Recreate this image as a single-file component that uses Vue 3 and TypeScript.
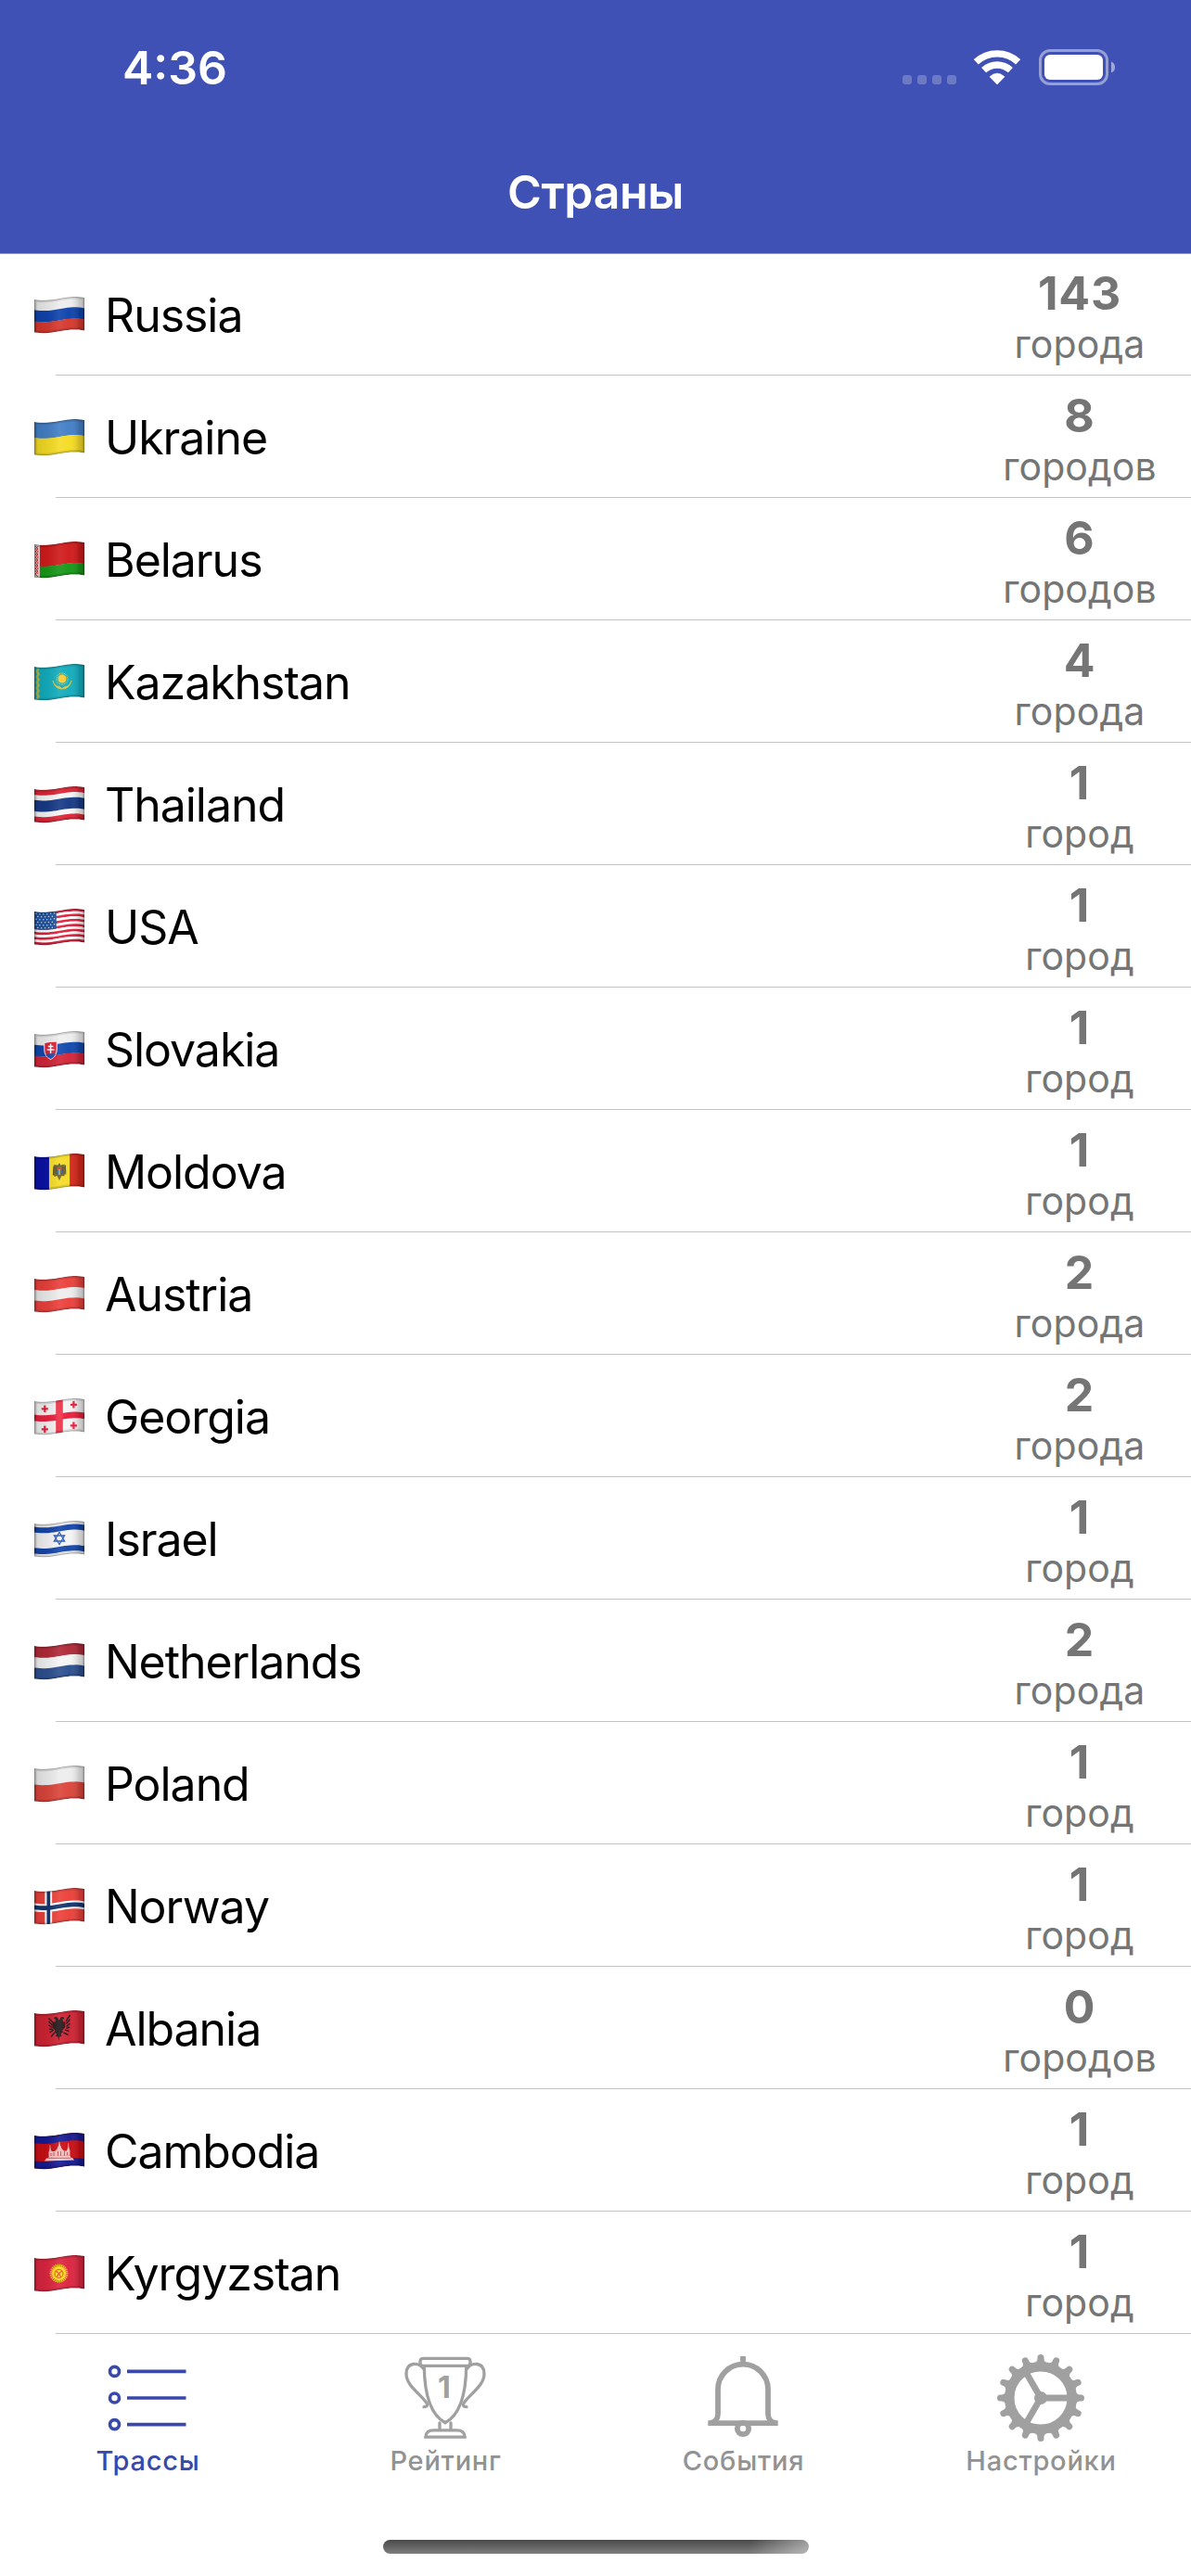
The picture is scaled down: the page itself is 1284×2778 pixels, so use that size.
<script setup lang="ts">
interface Shape {
  d?: string
  fill?: string
  stroke?: string
  sw?: number
}

interface Country {
  name: string
  count: number
  unit: string
  flag: Shape[]
}

const W = 54
const H = 35.4

/** Vertical offset of the waving cloth at horizontal position x. */
const wave = (x: number): number => {
  const amp = x > 44 ? 1.9 + (x - 44) * 0.02 : 1.9
  const period = x > 44 ? 54 : 68
  const phase = x > 44 ? (3 * Math.PI) / 2 + (2 * Math.PI * (x - 44)) / period : (2 * Math.PI * (x + 7)) / period
  return 1.9 + amp * Math.sin(phase)
}

/** A piece of cloth between two heights (0..1) and two widths (0..1). */
const band = (y1: number, y2: number, fill: string, x1 = 0, x2 = 1): Shape => {
  const steps = 18
  const xs = Array.from({ length: steps + 1 }, (_, i) => (x1 + ((x2 - x1) * i) / steps) * W)
  const top = xs.map((x) => `${x.toFixed(2)},${(wave(x) + y1 * H).toFixed(2)}`)
  const bottom = [...xs].reverse().map((x) => `${x.toFixed(2)},${(wave(x) + y2 * H).toFixed(2)}`)
  return { d: `M${top.join('L')}L${bottom.join('L')}Z`, fill }
}

const dots = (points: number[][], r: number, fill: string): Shape[] =>
  points.map(([x, y]) => ({ d: `M${x - r},${y}a${r},${r} 0 1,0 ${2 * r},0a${r},${r} 0 1,0 ${-2 * r},0Z`, fill }))

const rays = (cx: number, cy: number, r1: number, r2: number, n: number): string =>
  Array.from({ length: n }, (_, i) => {
    const a = (2 * Math.PI * i) / n
    return `M${(cx + r1 * Math.cos(a)).toFixed(2)},${(cy + r1 * Math.sin(a)).toFixed(2)}L${(cx + r2 * Math.cos(a)).toFixed(2)},${(cy + r2 * Math.sin(a)).toFixed(2)}`
  }).join('')

const clothPath = band(0, 1, '').d

const usa: Shape[] = [
  ...Array.from({ length: 13 }, (_, i) => band(i / 13, (i + 1) / 13, i % 2 ? '#ffffff' : '#e0213c')),
  band(0, 7 / 13, '#1f55a5', 0, 0.44),
  ...Array.from({ length: 6 }, (_, r) =>
    dots(
      Array.from({ length: 6 }, (_, c) => {
        const x = 2 + c * 3.9 + (r % 2 ? 1.8 : 0)
        return [x, wave(x) + 2 + r * 3]
      }).filter(([x]) => x < 23),
      0.75,
      '#d3e2f4',
    ),
  ).flat(),
]

const georgiaCross = (x: number, y: number): Shape => ({ d: `M${x - 3.5},${y}h7M${x},${y - 3.7}v7.4`, stroke: '#e8213f', sw: 2.2 })

const countries: Country[] = [
  { name: 'Russia', count: 143, unit: 'города', flag: [band(0, 0.35, '#ededed'), band(0.32, 0.67, '#0f43ac'), band(0.66, 1, '#d6392f')] },
  { name: 'Ukraine', count: 8, unit: 'городов', flag: [band(0, 0.49, '#4480c7'), band(0.48, 1, '#f5dc25')] },
  {
    name: 'Belarus',
    count: 6,
    unit: 'городов',
    flag: [
      band(0, 0.66, '#d01b1c'),
      band(0.65, 1, '#17981a'),
      band(0, 1, '#eed5d5', 0, 0.11),
      { d: 'M1,5l3,3l-3,3l3,3l-3,3l3,3l-3,3l3,3l-3,3l3,3l-3,3l3,3M4.3,5l-3,3l3,3l-3,3l3,3l-3,3l3,3l-3,3l3,3l-3,3l3,3', stroke: '#c23b41', sw: 1 },
    ],
  },
  {
    name: 'Kazakhstan',
    count: 4,
    unit: 'города',
    flag: [
      band(0, 1, '#13adbd'),
      { d: 'M4.5,5l-1.8,3l1.8,3l-1.8,3l1.8,3l-1.8,3l1.8,3l-1.8,3l1.8,3l-1.8,3l1.8,3l-1.8,3', stroke: '#b6b743', sw: 2.6 },
      ...dots([[30, 16]], 4.5, '#f9cb35'),
      { d: rays(30, 16, 5.3, 6.7, 22), stroke: '#e8c83f', sw: 0.8 },
      { d: 'M20,18q2,9 10,9t10,-9q-2,6 -7,6.6l-3,2l-3,-2q-5,-.6 -7,-6.6z', fill: '#e6c63c', stroke: '#d9c443', sw: 0.8 },
    ],
  },
  {
    name: 'Thailand',
    count: 1,
    unit: 'город',
    flag: [band(0, 1, '#f6f6f6'), band(0, 0.17, '#dc2637'), band(0.33, 0.67, '#183a86'), band(0.83, 1, '#dc2637')],
  },
  { name: 'USA', count: 1, unit: 'город', flag: usa },
  {
    name: 'Slovakia',
    count: 1,
    unit: 'город',
    flag: [
      band(0, 0.34, '#eeeeee'),
      band(0.33, 0.67, '#1149ae'),
      band(0.66, 1, '#d22639'),
      { d: 'M10.8,12.5q6.700,-1.500 13.500,-1.500v8q0,8 -6.700,11.500q-6.800,-3.500 -6.800,-10.500z', fill: '#e02339', stroke: '#ffffff', sw: 1 },
      { d: 'M12.3,25.5q2.500,-2 5.300,-1q2.700,-1.300 5.200,.5q-1.500,3.300 -5.200,5q-3.800,-1.900 -5.300,-4.500z', fill: '#1a55b5' },
      { d: 'M17.6,13.500v10.500M14.800,16.500h5.600M13.700,20h7.800', stroke: '#ffffff', sw: 1.5 },
    ],
  },
  {
    name: 'Moldova',
    count: 1,
    unit: 'город',
    flag: [
      band(0, 1, '#0b12a6', 0, 0.3),
      band(0, 1, '#f4dc27', 0.295, 0.71),
      band(0, 1, '#d4281c', 0.705, 1),
      { d: 'M27,10l1.500,2.500l4,-1l1.200,8l-1.500,5l-2.700,-.5l-2.500,5l-2.500,-5l-2.800,1l-1.600,-5l1.200,-8l4,.5z', fill: '#6f602c' },
      { d: 'M21,13.500l-.6,10M33.500,12.500l.3,10M23,14l1,8M31,14l-1,8', stroke: '#4c4a22', sw: 1 },
      { d: 'M24.500,15h5v3h-5z', fill: '#d4432a' },
      { d: 'M24,18h6v2.500l-3,3.500l-3,-3.500z', fill: '#2b70ab' },
      { d: 'M27,17v6', stroke: '#e8b62d', sw: 1.3 },
    ],
  },
  { name: 'Austria', count: 2, unit: 'города', flag: [band(0, 0.35, '#eb413c'), band(0.34, 0.67, '#ededed'), band(0.66, 1, '#eb413c')] },
  {
    name: 'Georgia',
    count: 2,
    unit: 'города',
    flag: [
      band(0, 1, '#f3f3f3'),
      band(0.41, 0.6, '#e8213f'),
      band(0, 1, '#ef3149', 0.43, 0.57),
      georgiaCross(11.3, 11.3),
      georgiaCross(42.4, 6.8),
      georgiaCross(11.3, 33.3),
      georgiaCross(42.4, 29.3),
    ],
  },
  {
    name: 'Israel',
    count: 1,
    unit: 'город',
    flag: [
      band(0, 1, '#f4f4f4'),
      band(0.1, 0.27, '#1546a9'),
      band(0.74, 0.91, '#1546a9'),
      { d: 'M27,12.500l5.600,9.500h-11.200zM27,25.500l-5.600,-9.500h11.200z', stroke: '#2455b8', sw: 1.3 },
    ],
  },
  { name: 'Netherlands', count: 2, unit: 'города', flag: [band(0, 0.35, '#b02a38'), band(0.34, 0.67, '#f4f4f4'), band(0.66, 1, '#2d5090')] },
  { name: 'Poland', count: 1, unit: 'город', flag: [band(0, 0.5, '#ededed'), band(0.49, 1, '#db463c')] },
  {
    name: 'Norway',
    count: 1,
    unit: 'город',
    flag: [
      band(0, 1, '#ec413b'),
      band(0.38, 0.63, '#ffffff'),
      band(0, 1, '#ffffff', 0.21, 0.355),
      band(0.44, 0.57, '#12356f'),
      band(0, 1, '#12356f', 0.25, 0.318),
    ],
  },
  {
    name: 'Albania',
    count: 0,
    unit: 'городов',
    flag: [
      band(0, 1, '#cf2434'),
      { d: 'M26.500,11l-1.500,-3.500q-3,-1.500 -4,1.500l2,.5l-.5,3l-3,0l0,6l3,3l-1,2l2.500,1.500l-1,3l2.500,.5l.8,5l.8,-5l2.500,-.5l-1,-3l2.500,-1.500l-1,-2l3,-3l.5,-6l-2.500,0l-.7,-3l2,-.5q-1,-3 -4,-1.500z', fill: '#25191b' },
      { d: 'M15.500,8.500l4.500,4.500M15.500,12l4,4M15.500,16l4,2.500M16,20l4,.5M16.500,24l4.500,-3M18,28.500l4,-4.500M38.500,5l-4.500,7M38.500,9.500l-4,5M38.500,14l-4,3.500M38,18l-3.500,1.500M37.500,22.500l-4.500,-1.500M36.500,26.500l-5,-2.500', stroke: '#2c171a', sw: 1.4 },
    ],
  },
  {
    name: 'Cambodia',
    count: 1,
    unit: 'город',
    flag: [
      band(0, 1, '#c90f15'),
      band(0, 0.23, '#171b93'),
      band(0.77, 1, '#171b93'),
      { d: 'M11,30.500l2,-3h2l1,-3h22.500l1,2.500h1.500l2,2.500z', fill: '#f2c9c9' },
      { d: 'M15.500,25v-4l1.500,-5l1.700,4l3.300,0l2.500,-2.500l2.500,-6.500l2.500,6l2.500,2.500h3l1.700,-6l1.800,6v5z', fill: '#eebcbc' },
      { d: 'M15,27.300h24M21,21v4M32.500,20v5M25.500,20v5M28.500,20v5M18,22v3M35.500,21v3', stroke: '#cf4a4d', sw: 0.9 },
      { d: 'M17,13.500v4M27,9.500v4M36.700,11.500v4', stroke: '#eebcbc', sw: 0.8 },
    ],
  },
  {
    name: 'Kyrgyzstan',
    count: 1,
    unit: 'город',
    flag: [
      band(0, 1, '#dc2640'),
      { d: rays(26.5, 19.7, 6, 10, 26), stroke: '#f6cf1f', sw: 1.3 },
      ...dots([[26.5, 19.7]], 7.3, '#fbdc1c'),
      { d: 'M22,20a4.500,4.500 0 1,0 9,0a4.500,4.500 0 1,0 -9,0M23,17q4,2 5.500,6.500M30,17q-4,2 -5.500,6.500', stroke: '#e6522b', sw: 1.1 },
    ],
  },
]

const teeth = Array.from({ length: 16 }, (_, i) => i * 22.5)
</script>

<template>
  <div class="screen">
    <header class="header">
      <div class="status">
        <span class="time">4:36</span>
        <div class="indicators">
          <span class="cell"><i v-for="n in 4" :key="n" /></span>
          <svg class="wifi" width="52" height="38" viewBox="0 0 52 38">
            <path d="M3.300,12.800A33.200,33.200 0 0 1 48.700,12.800" fill="none" stroke="#fff" stroke-width="7.400" />
            <path d="M11.600,21.700A21,21 0 0 1 40.400,21.700" fill="none" stroke="#fff" stroke-width="7.300" />
            <path d="M26,37L18,28.700Q26,21.500 34,28.700Z" fill="#fff" stroke="#fff" stroke-width=".6" stroke-linejoin="round" />
          </svg>
          <svg class="battery" width="84" height="40" viewBox="0 0 84 40">
            <rect x="1.500" y="1.500" width="72" height="36" rx="10.500" fill="none" stroke="#fff" stroke-opacity=".45" stroke-width="3" />
            <rect x="6" y="6" width="63" height="27" rx="6" fill="#fff" />
            <path d="M78,13.500q4,1.500 4,6t-4,6z" fill="#fff" fill-opacity=".5" />
          </svg>
        </div>
      </div>
      <h1 class="title">Страны</h1>
    </header>

    <svg class="defs" width="0" height="0">
      <defs>
        <linearGradient id="shade" x1="0" x2="1" y1="0" y2="0">
          <stop offset="0" stop-color="#000" stop-opacity=".22" />
          <stop offset=".07" stop-color="#000" stop-opacity=".1" />
          <stop offset=".25" stop-color="#000" stop-opacity=".06" />
          <stop offset=".5" stop-color="#fff" stop-opacity=".08" />
          <stop offset=".7" stop-color="#fff" stop-opacity=".02" />
          <stop offset=".9" stop-color="#000" stop-opacity=".16" />
          <stop offset="1" stop-color="#000" stop-opacity=".2" />
        </linearGradient>
        <clipPath id="cloth"><path :d="clothPath" /></clipPath>
      </defs>
    </svg>

    <main class="list">
      <section v-for="c in countries" :key="c.name" class="row">
        <svg class="flag" width="54" height="40" viewBox="0 0 54 40">
          <g clip-path="url(#cloth)">
            <path
              v-for="(s, i) in c.flag"
              :key="i"
              :d="s.d"
              :fill="s.fill ?? 'none'"
              :stroke="s.stroke"
              :stroke-width="s.sw"
            />
            <path :d="clothPath" fill="url(#shade)" />
            <path :d="clothPath" fill="none" stroke="#000" stroke-opacity=".1" stroke-width="5" />
            <path :d="clothPath" fill="none" stroke="#000" stroke-opacity=".2" stroke-width="2" />
          </g>
        </svg>
        <span class="name">{{ c.name }}</span>
        <div class="total">
          <b class="count">{{ c.count }}</b>
          <span class="unit">{{ c.unit }}</span>
        </div>
      </section>
    </main>

    <nav class="tabs">
      <a class="tab active">
        <svg class="icon" width="100" height="100" viewBox="0 0 100 100">
          <g fill="none" stroke="currentColor" stroke-width="3.600">
            <circle cx="14.500" cy="21.400" r="5" />
            <circle cx="14.500" cy="50" r="5" />
            <circle cx="14.500" cy="78.600" r="5" />
            <path d="M28,21.400H91.500M28,50H91.500M28,78.600H91.500" />
          </g>
        </svg>
        <span class="label">Трассы</span>
      </a>
      <a class="tab">
        <svg class="icon" width="100" height="100" viewBox="0 0 100 100">
          <g fill="none" stroke="currentColor" stroke-width="3.300" stroke-linecap="round">
            <path d="M26,15.300Q23,15.300 23,12.300V10.500Q23,7.400 26.500,7.400H73.500Q77,7.400 77,10.500V12.300Q77,15.300 74,15.300Z" />
            <path d="M27.300,16C27.600,45 34,68 50,76.800C66,68 72.400,45 72.700,16" />
            <path d="M26,18C22,11.500 8,10.500 8,24C8,36 21,44 29,54C32,58 30.500,59.500 27,59.700" />
            <path d="M74,18C78,11.500 92,10.500 92,24C92,36 79,44 71,54C68,58 69.500,59.500 73,59.700" />
            <path d="M44,77V84M56,77V84" />
            <path d="M28.800,92.200H71.200C71.200,87.500 68,84.800 63,84.800H37C32,84.800 28.800,87.500 28.800,92.200Z" />
          </g>
          <text x="49" y="50" text-anchor="middle" class="place">1</text>
        </svg>
        <span class="label">Рейтинг</span>
      </a>
      <a class="tab">
        <svg class="icon" width="100" height="100" viewBox="0 0 100 100">
          <g fill="none" stroke="currentColor" stroke-width="5.800">
            <path d="M50,5V12" />
            <path d="M14.500,76.900C20,76.500 23,72 23,67V40.700A27,27 0 0 1 77,40.700V67C77,72 80,76.500 85.500,76.900" />
            <path d="M12.300,77.100H87.700" />
            <circle cx="50" cy="83" r="6.200" />
          </g>
        </svg>
        <span class="label">События</span>
      </a>
      <a class="tab">
        <svg class="icon" width="100" height="100" viewBox="0 0 100 100">
          <g transform="translate(50 50)" fill="none" stroke="currentColor">
            <circle r="33.700" stroke-width="10.400" />
            <path
              v-for="a in teeth"
              :key="a"
              :transform="`rotate(${a})`"
              d="M-6.500,-38C-3.500,-39.500 -3.600,-41 -3.500,-43.500A3.500,3.500 0 0 1 3.500,-43.500C3.600,-41 3.500,-39.500 6.500,-38Z"
              fill="currentColor"
              stroke="none"
            />
            <path d="M0,0H30M0,0L-15,-26M0,0L-15,26" stroke-width="6.800" />
            <circle r="7" fill="currentColor" stroke="none" />
          </g>
        </svg>
        <span class="label">Настройки</span>
      </a>
    </nav>
    <div class="home"><span class="home-bar" /></div>
  </div>
</template>

<style>
body {
  margin: 0;
  background: #fff;
}
</style>

<style scoped>
.screen {
  display: flex;
  flex-direction: column;
  width: 1284px;
  height: 2778px;
  overflow: hidden;
  background: #fff;
  font-family: Inter, 'Liberation Sans', sans-serif;
}
.header {
  flex: none;
  height: 273px;
  background: #3f51b5;
  color: #fff;
  box-shadow: 0 1px 0 #9a9aae;
  display: flex;
  flex-direction: column;
}
.status {
  display: flex;
  justify-content: space-between;
  height: 144px;
  padding: 0 80px 0 132px;
}
.time {
  font-size: 50px;
  font-weight: 600;
  line-height: 146px;
}
.indicators {
  display: flex;
  align-items: flex-start;
  padding-top: 53px;
}
.cell {
  display: flex;
  gap: 6px;
  margin: 28px 18px 0 0;
}
.cell i {
  width: 10px;
  height: 10px;
  border-radius: 3px;
  background: rgba(255, 255, 255, 0.24);
}
.wifi {
  margin: 1px 19px 0 0;
}
.title {
  margin: 0;
  font-size: 50px;
  font-weight: 600;
  letter-spacing: -0.4px;
  line-height: 126px;
  text-align: center;
}
.defs {
  flex: none;
  position: absolute;
}
.list {
  flex: none;
}
.row {
  display: flex;
  height: 132px;
  padding-left: 37px;
  background: linear-gradient(#c4c4c6, #c4c4c6) no-repeat 60px 131px / 100% 1px;
}
.flag {
  flex: none;
  margin: 47px 22px 0 0;
}
.name {
  flex: 1;
  font-size: 50px;
  letter-spacing: -1.05px;
  line-height: 134px;
  color: #000;
}
.total {
  display: flex;
  flex-direction: column;
  align-items: center;
  width: 240px;
  padding-top: 16px;
  color: #757575;
}
.count {
  font-size: 50px;
  font-weight: 700;
  letter-spacing: 0.8px;
  line-height: 54px;
}
.unit {
  margin-top: 4px;
  font-size: 41px;
  letter-spacing: 0.1px;
  line-height: 48px;
}
.tabs {
  flex: none;
  display: flex;
  height: 183px;
}
.tab {
  flex: 1;
  display: flex;
  flex-direction: column;
  align-items: center;
  padding: 19px 3px 0 0;
  color: #a0a0a0;
}
.label {
  margin-right: -1px;
  font-size: 29px;
  font-weight: 500;
  letter-spacing: 0.75px;
  line-height: 36px;
  color: #929292;
}
.tab.active,
.tab.active .label {
  color: #3949ab;
}
.place {
  font-size: 32px;
  font-weight: 700;
  fill: currentColor;
}
.home {
  display: flex;
  justify-content: center;
  padding-top: 39px;
}
.home-bar {
  width: 459px;
  height: 15px;
  border-radius: 8px;
  background: linear-gradient(100deg, transparent 86%, rgba(255, 255, 255, 0.45) 100%), linear-gradient(#4a4a4a, #7e7e7e);
}
</style>
